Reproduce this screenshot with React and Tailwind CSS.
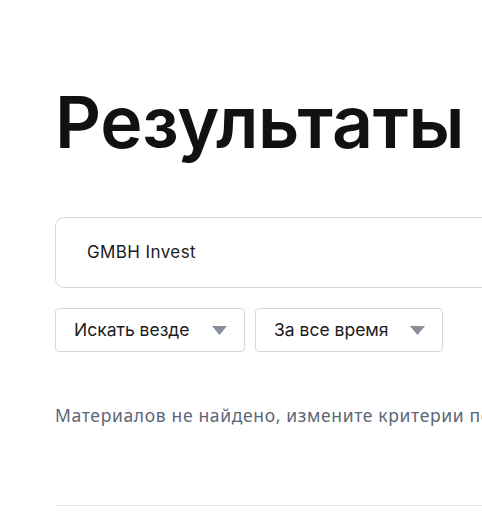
export default function App() {
  const Tri = () => (
    <svg width="15" height="9" viewBox="0 0 15 9" className="shrink-0">
      <path d="M0 0 H15 L7.5 9 Z" fill="#868e99" />
    </svg>
  );
  return (
    <div className="w-[482px] h-[512px] overflow-hidden bg-white" style={{ fontFamily: "Inter, 'Noto Sans', sans-serif" }}>
      <div className="w-[700px] pl-[55px] pt-[79px]">
        <h1 className="text-[71.5px] leading-[86px] font-semibold text-[#111111] tracking-[-0.3px]">Результаты</h1>
        <div className="mt-[52px] h-[71px] rounded-[9px] border border-[#d5d8dc] flex items-center pl-[31px] text-[17px] tracking-[0.4px] text-[#1c1c1c]">
          GMBH Invest
        </div>
        <div className="mt-[20px] flex gap-[10px]">
          <div className="w-[190px] h-[44px] rounded-[4px] border border-[#d5d8dc] flex items-center justify-between pl-[18px] pr-[17px] text-[17.5px] text-[#1c1c1c]">
            <span>Искать везде</span>
            <Tri />
          </div>
          <div className="w-[188px] h-[44px] rounded-[4px] border border-[#d5d8dc] flex items-center justify-between pl-[18px] pr-[17px] text-[17.5px] text-[#1c1c1c]">
            <span>За все время</span>
            <Tri />
          </div>
        </div>
        <p className="mt-[50px] text-[17.5px] text-[#5b6675] whitespace-nowrap tracking-[0.65px]" style={{ fontFamily: "'Noto Sans', sans-serif" }}>
          Материалов не найдено, измените критерии поиска
        </p>
        <div className="mt-[77px] h-px bg-[#e6e6e6]" />
      </div>
    </div>
  );
}
